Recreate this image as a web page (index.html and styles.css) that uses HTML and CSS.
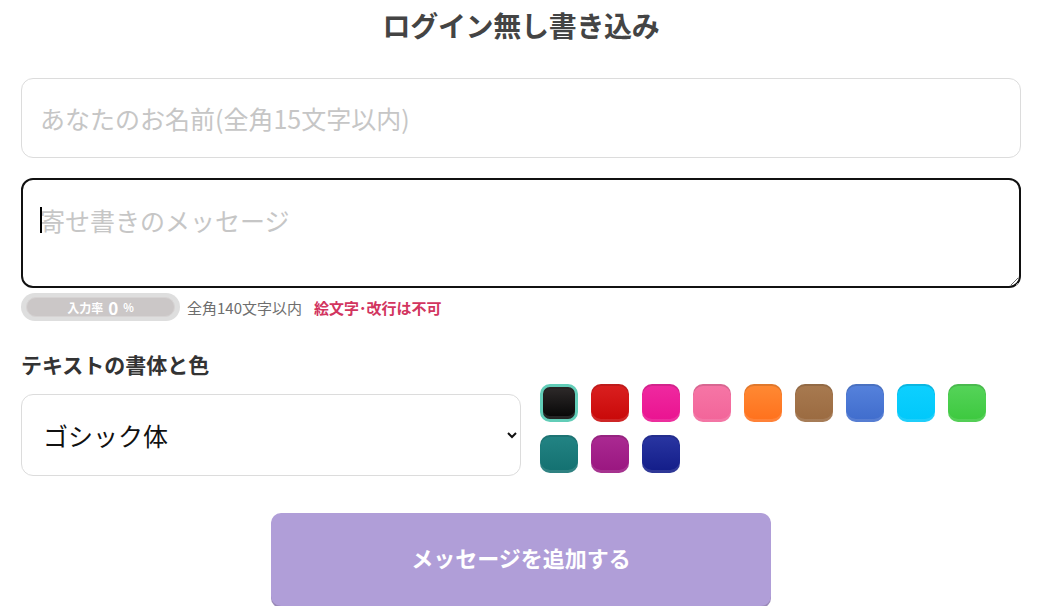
FILE: index.html
```html
<!DOCTYPE html>
<html lang="ja">
<head>
<meta charset="utf-8">
<title>ログイン無し書き込み</title>
<link rel="stylesheet" href="styles.css">
</head>
<body>
<main class="form-wrap">
  <h1 class="title">ログイン無し書き込み</h1>
  <input class="field name-field" type="text" placeholder="あなたのお名前(全角15文字以内)">
  <div class="msg-wrap">
    <textarea class="field msg-field" placeholder="寄せ書きのメッセージ"></textarea>
    <span class="caret"></span>
  </div>
  <div class="meta-row">
    <div class="rate-pill"><div class="rate-bar"><span class="rate-label">入力率</span><span class="rate-num">0</span><span class="rate-pct">%</span></div></div>
    <span class="limit-note">全角140文字以内</span>
    <span class="warn-note">絵文字･改行は不可</span>
  </div>
  <h2 class="section-label">テキストの書体と色</h2>
  <div class="style-row">
    <select class="field font-select">
      <option>ゴシック体</option>
      <option>明朝体</option>
    </select>
    <div class="swatches">
      <span class="swatch sw-black selected"></span>
      <span class="swatch sw-red"></span>
      <span class="swatch sw-pink"></span>
      <span class="swatch sw-lpink"></span>
      <span class="swatch sw-orange"></span>
      <span class="swatch sw-brown"></span>
      <span class="swatch sw-blue"></span>
      <span class="swatch sw-cyan"></span>
      <span class="swatch sw-green"></span>
      <span class="swatch sw-teal"></span>
      <span class="swatch sw-purple"></span>
      <span class="swatch sw-navy"></span>
    </div>
  </div>
  <div class="submit-row">
    <button class="submit-btn" type="button">メッセージを追加する</button>
  </div>
</main>
</body>
</html>
```
FILE: styles.css
```css
* { box-sizing: border-box; }
html, body { margin: 0; padding: 0; background: #fff; }
body {
  font-family: "Noto Sans CJK JP", "Noto Sans", "Liberation Sans", sans-serif;
  color: #333;
}
.form-wrap {
  padding: 7px 21px 0 21px;
  display: flex;
  flex-direction: column;
}
.title {
  margin: 0 0 34px;
  text-align: center;
  font-size: 28px;
  line-height: 37px;
  font-weight: 700;
  color: #444;
  letter-spacing: -0.3px;
}
.field {
  font-family: "Noto Sans CJK JP", "Noto Sans", sans-serif;
  width: 100%;
  border: 1px solid #dcdcdc;
  border-radius: 12px;
  background: #fff;
  font-size: 25px;
  color: #222;
  outline: none;
}
.field::placeholder { color: #c6c6c6; }
.name-field {
  height: 80px;
  padding: 0 18px;
}
.msg-wrap {
  position: relative;
  margin-top: 20px;
}
.msg-field {
  height: 110px;
  padding: 22px 17px;
  border: 2px solid #111;
  line-height: 36px;
  resize: vertical;
  display: block;
}
.caret {
  position: absolute;
  left: 19px;
  top: 29px;
  width: 2px;
  height: 26px;
  background: #000;
}
.meta-row {
  margin-top: 5px;
  display: flex;
  align-items: center;
  gap: 6px;
  height: 28px;
}
.rate-pill {
  width: 159px;
  height: 28px;
  border-radius: 14px;
  background: #dedede;
  padding: 4px 5px;
}
.rate-bar {
  height: 20px;
  border-radius: 10px;
  background: #cbc7c7;
  border: 1px solid #d6d3d3;
  display: flex;
  align-items: center;
  justify-content: center;
  gap: 5px;
  color: #fff;
  font-weight: 700;
}
.rate-label { font-size: 12px; }
.rate-num { font-size: 17px; line-height: 1; }
.rate-pct { font-size: 11px; }
.limit-note {
  margin-left: 1px;
  font-size: 15px;
  color: #6e6e6e;
}
.warn-note {
  margin-left: 6px;
  font-size: 15px;
  font-weight: 700;
  color: #d2355f;
}
.section-label {
  margin: 29px 0 6px;
  font-size: 21px;
  line-height: 28px;
  font-weight: 700;
  color: #333;
}
.style-row {
  display: flex;
  align-items: flex-start;
  gap: 19px;
}
.font-select {
  flex: 0 0 500px;
  margin-top: 10px;
  height: 82px;
  padding: 0 10px 0 17px;
  color: #111;
  font-size: 25px;
}
.swatches {
  flex: 1;
  display: flex;
  flex-wrap: wrap;
  gap: 13px;
}
.swatch {
  width: 38px;
  height: 38px;
  border-radius: 10px;
  display: block;
  box-shadow: inset 0 2px 0 rgba(0,0,0,0.12), inset 0 -3px 0 rgba(255,255,255,0.12);
}
.swatch.selected {
  border: 3px solid #62cdb8;
}
.sw-black { background: linear-gradient(#2e2a2a, #050505); }
.sw-red { background: linear-gradient(#da2020, #c80808); }
.sw-pink { background: linear-gradient(#ef2aa0, #ea1290); }
.sw-lpink { background: linear-gradient(#f676a6, #f26499); }
.sw-orange { background: linear-gradient(#ff8a34, #ff701c); }
.sw-brown { background: linear-gradient(#a87a50, #9a6a40); }
.sw-blue { background: linear-gradient(#5682dc, #3f6ccc); }
.sw-cyan { background: linear-gradient(#0ed0ff, #00c8fa); }
.sw-green { background: linear-gradient(#56d45a, #3cc83e); }
.sw-teal { background: linear-gradient(#238484, #137070); }
.sw-purple { background: linear-gradient(#ab2a92, #99167f); }
.sw-navy { background: linear-gradient(#2a36a2, #121c88); }
.submit-row {
  margin-top: 37px;
  display: flex;
  justify-content: center;
}
.submit-btn {
  width: 500px;
  height: 93px;
  border: none;
  border-radius: 10px;
  background: #b09ed8;
  box-shadow: 0 2px 0 #9a8ab8;
  color: #fff;
  font-family: "Noto Sans CJK JP", "Noto Sans", sans-serif;
  font-size: 22px;
  font-weight: 700;
  padding: 0 0 6px;
}
```
